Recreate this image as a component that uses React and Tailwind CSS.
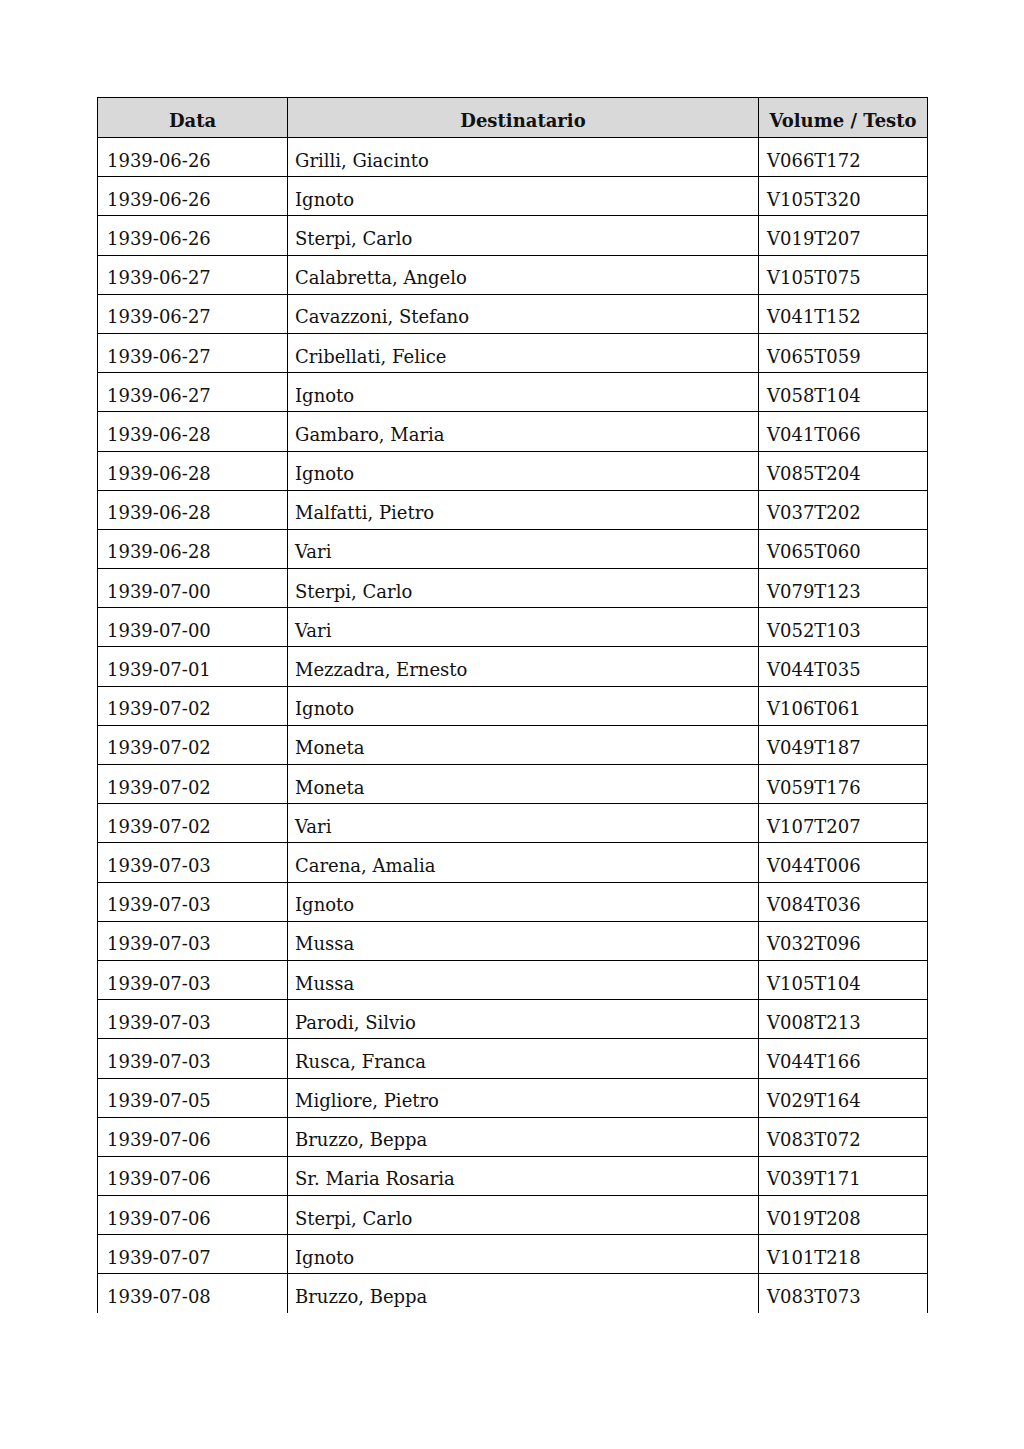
import React from "react";

const rows = [
  ["1939-06-26", "Grilli, Giacinto", "V066T172"],
  ["1939-06-26", "Ignoto", "V105T320"],
  ["1939-06-26", "Sterpi, Carlo", "V019T207"],
  ["1939-06-27", "Calabretta, Angelo", "V105T075"],
  ["1939-06-27", "Cavazzoni, Stefano", "V041T152"],
  ["1939-06-27", "Cribellati, Felice", "V065T059"],
  ["1939-06-27", "Ignoto", "V058T104"],
  ["1939-06-28", "Gambaro, Maria", "V041T066"],
  ["1939-06-28", "Ignoto", "V085T204"],
  ["1939-06-28", "Malfatti, Pietro", "V037T202"],
  ["1939-06-28", "Vari", "V065T060"],
  ["1939-07-00", "Sterpi, Carlo", "V079T123"],
  ["1939-07-00", "Vari", "V052T103"],
  ["1939-07-01", "Mezzadra, Ernesto", "V044T035"],
  ["1939-07-02", "Ignoto", "V106T061"],
  ["1939-07-02", "Moneta", "V049T187"],
  ["1939-07-02", "Moneta", "V059T176"],
  ["1939-07-02", "Vari", "V107T207"],
  ["1939-07-03", "Carena, Amalia", "V044T006"],
  ["1939-07-03", "Ignoto", "V084T036"],
  ["1939-07-03", "Mussa", "V032T096"],
  ["1939-07-03", "Mussa", "V105T104"],
  ["1939-07-03", "Parodi, Silvio", "V008T213"],
  ["1939-07-03", "Rusca, Franca", "V044T166"],
  ["1939-07-05", "Migliore, Pietro", "V029T164"],
  ["1939-07-06", "Bruzzo, Beppa", "V083T072"],
  ["1939-07-06", "Sr. Maria Rosaria", "V039T171"],
  ["1939-07-06", "Sterpi, Carlo", "V019T208"],
  ["1939-07-07", "Ignoto", "V101T218"],
  ["1939-07-08", "Bruzzo, Beppa", "V083T073"],
];

const App = () => {
  return (
    <div className="w-[1024px] h-[1449px] bg-white pt-[97px] pl-[97px] text-[#111] font-['DejaVu_Serif',serif] text-[18px]">
      <table className="border-collapse table-fixed w-[830px]">
        <colgroup>
          <col className="w-[190px]" />
          <col className="w-[471px]" />
          <col className="w-[169px]" />
        </colgroup>
        <thead>
          <tr className="h-[40px] bg-[#d9d9d9] font-bold">
            <th className="border border-black text-center pt-[5px] p-0">Data</th>
            <th className="border border-black text-center pt-[5px] p-0">Destinatario</th>
            <th className="border border-black text-center pt-[5px] p-0">Volume / Testo</th>
          </tr>
        </thead>
        <tbody>
          {rows.map((r, i) => {
            const last = i === rows.length - 1;
            const cell = last ? "border-x border-t border-black pt-[6px]" : "border border-black pt-[6px]";
            return (
              <tr key={i} className="h-[39.2px]">
                <td className={`${cell} pl-[9px]`}>{r[0]}</td>
                <td className={`${cell} pl-[7px]`}>{r[1]}</td>
                <td className={`${cell} pl-[8px]`}>{r[2]}</td>
              </tr>
            );
          })}
        </tbody>
      </table>
    </div>
  );
};

export default App;
